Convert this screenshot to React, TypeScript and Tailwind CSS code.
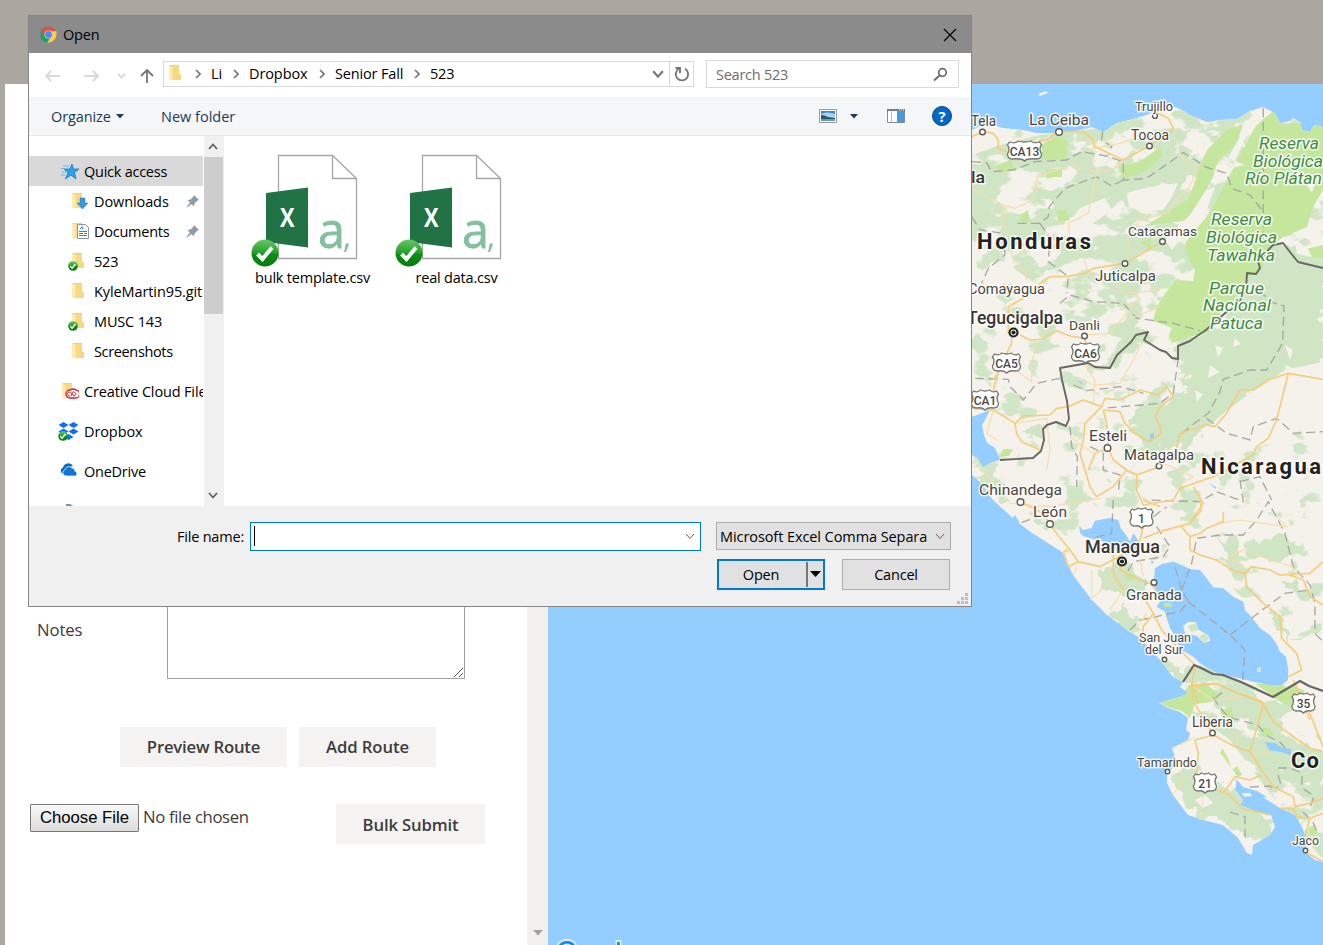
import React from "react";

const UI = "font-['Open_Sans','Noto_Sans',sans-serif]";

function Folder({ className = "" }: { className?: string }) {
  return (
    <svg className={className} width="14" height="18" viewBox="0 0 14 18">
      <path d="M1 1h10v9h2v6H4L1 15z" fill="#f3d06f" />
      <path d="M4 2h7v8h2v6H4z" fill="#f6d982" />
      <path d="M1 1l3.5 2v14L1 15z" fill="#ffeab0" />
    </svg>
  );
}

function Check({ size }: { size: number }) {
  return (
    <svg width={size} height={size} viewBox="0 0 28 28">
      <defs>
        <linearGradient id="ok" x1="0" y1="0" x2="0" y2="1">
          <stop offset="0" stopColor="#67c767" />
          <stop offset=".5" stopColor="#22a02a" />
          <stop offset=".55" stopColor="#0a8d14" />
          <stop offset="1" stopColor="#067d0c" />
        </linearGradient>
      </defs>
      <circle cx="14" cy="14" r="13.5" fill="url(#ok)" />
      <path d="M6.500 15l5 5L21 8.500" fill="none" stroke="#fff" strokeWidth="4" />
    </svg>
  );
}

function FileIcon() {
  return (
    <svg width="108" height="116" viewBox="0 0 108 116">
      <path d="M26.500 1.500h54L104.500 24.500V104.500H26.500z" fill="#fff" stroke="#a6a6a6" strokeWidth="1.300" />
      <path d="M80.500 1.500V24.500h24" fill="none" stroke="#a6a6a6" strokeWidth="1.300" />
      <path d="M14 39L56 33.500V93.500L14 88z" fill="#217346" />
      <text x="28" y="73" fontFamily="Open Sans" fontWeight="700" fontSize="27" textLength="14.500" lengthAdjust="spacingAndGlyphs" fill="#fff">X</text>
      <text x="66" y="94" fontFamily="Open Sans" fontSize="50" fill="#86bf9f" stroke="#86bf9f" strokeWidth=".8" textLength="27" lengthAdjust="spacingAndGlyphs">a</text>
      <text x="90.500" y="94" fontFamily="Open Sans" fontSize="34" fill="#86bf9f">,</text>
    </svg>
  );
}

function Pin() {
  return (
    <svg width="13" height="13" viewBox="0 0 13 13">
      <path d="M8 0l5 5-1.500.5-3 3-.500 3L5.500 9 1 12.500.500 12 4 7.500 1.500 5l3-.500 3-3z" fill="#8e9aa5" />
    </svg>
  );
}

function Chevron({ className = "", w = 10, color = "#606060", sw = 1.8 }: { className?: string; w?: number; color?: string; sw?: number }) {
  return (
    <svg className={className} width={w} height={w * 0.7} viewBox="0 0 10 7">
      <path d="M1 1l4 4.500L9 1" fill="none" stroke={color} strokeWidth={sw} />
    </svg>
  );
}

type LabelProps = { x: number; y: number; w: number; s?: number; children: string; weight?: number; green?: boolean; ls?: number };
function Label({ x, y, w, s = 14, children, weight = 400, green, ls }: LabelProps) {
  return (
    <text
      x={x}
      y={y}
      fontSize={s}
      fontFamily="Roboto, sans-serif"
      fontWeight={weight}
      fontStyle={green ? "italic" : "normal"}
      fill={green ? "#3f8c3f" : weight > 500 ? "#222" : weight > 400 ? "#383633" : "#4a4742"}
      stroke="#fff"
      strokeOpacity=".85"
      strokeWidth="3"
      strokeLinejoin="round"
      paintOrder="stroke"
      letterSpacing={ls}
      textLength={w}
      lengthAdjust={ls ? "spacing" : "spacingAndGlyphs"}
    >
      {children}
    </text>
  );
}

function Shield({ x, y, w, children }: { x: number; y: number; w: number; children: string }) {
  const h = w / 2;
  return (
    <g transform={`translate(${x} ${y})`}>
      <path
        d={`M${-h + 2} -9Q${-h / 2} -7 ${-h / 2 + 2} -10Q0 -8 ${h / 2 - 2} -10Q${h / 2} -7 ${h - 2} -9L${h} -6Q${h - 3} -2 ${h} 3Q${h} 8 ${h - 5} 8Q3 7 0 10Q-3 7 ${-h + 5} 8Q${-h} 8 ${-h} 3Q${-h + 3} -2 ${-h} -6z`}
        fill="#fff"
        stroke="#777570"
        strokeWidth="1.300"
      />
      <text textAnchor="middle" y="4.500" fontSize="12" fontWeight="500" fontFamily="Roboto, sans-serif" fill="#4b4844">{children}</text>
    </g>
  );
}

function Town({ x, y, r = 2.8 }: { x: number; y: number; r?: number }) {
  return <circle cx={x} cy={y} r={r} fill="#fff" stroke="#5c5a56" strokeWidth="1.400" />;
}

function Capital({ x, y }: { x: number; y: number }) {
  return (
    <g>
      <circle cx={x} cy={y} r="4" fill="#fff" stroke="#222" strokeWidth="2.200" />
      <circle cx={x} cy={y} r="2.100" fill="#222" />
    </g>
  );
}

const LAND =
  "M972 130L980 126 993 125 1003 128 1023 130 1037 133 1060 133 1080 130 1092 127 1103 132 1117 123 1137 118 1155 112 1163 108 1175 107 1182 110 1190 115 1207 122 1220 120 1237 119 1250 111 1263 107 1275 113 1280 123 1290 121 1293 118 1300 122 1302 130 1310 132 1314 125 1323 127V862L1315 860 1305 852 1307 840 1302 827 1295 815 1280 808 1267 800 1253 790 1243 787 1237 780 1235 790 1243 800 1240 805 1257 812 1271 815 1275 827 1270 835 1253 845 1252 855 1247 853 1238 838 1223 825 1203 820 1188 815 1173 795 1167 783 1167 772 1177 765 1172 748 1188 740 1190 733 1186 730 1188 718 1180 712 1168 708 1159 703 1180 697 1188 693 1180 687 1183 682 1173 677 1160 660 1140 638 1130 632 1107 615 1092 600 1073 575 1062 552 1032 533 1015 520 993 500 980 482 972 475z";

function MapDrawing() {
  return (
    <svg className="block" width="775" height="861" viewBox="548 84 775 861">
      <defs>
        <filter id="rough" x="-10%" y="-10%" width="120%" height="120%" colorInterpolationFilters="sRGB">
          <feTurbulence type="fractalNoise" baseFrequency=".07" numOctaves="3" seed="4" result="n" />
          <feDisplacementMap in="SourceGraphic" in2="n" scale="20" xChannelSelector="R" yChannelSelector="G" />
        </filter>
        <filter id="dense" x="0" y="0" width="100%" height="100%" colorInterpolationFilters="sRGB">
          <feTurbulence type="fractalNoise" baseFrequency=".028 .042" numOctaves="4" seed="11" />
          <feColorMatrix values="0 0 0 0 0  0 0 0 0 0  0 0 0 0 0  14 0 0 0 -6.300" result="m" />
          <feComposite in="SourceGraphic" in2="m" operator="in" />
        </filter>
        <filter id="sparse" x="0" y="0" width="100%" height="100%" colorInterpolationFilters="sRGB">
          <feTurbulence type="fractalNoise" baseFrequency=".035 .045" numOctaves="4" seed="7" />
          <feColorMatrix values="0 0 0 0 0  0 0 0 0 0  0 0 0 0 0  14 0 0 0 -8.300" result="m" />
          <feComposite in="SourceGraphic" in2="m" operator="in" />
        </filter>
        <clipPath id="land"><path d={LAND} /></clipPath>
      </defs>
      <rect x="548" y="84" width="775" height="861" fill="#94cdff" />
      <path d={LAND} fill="#f5f2eb" />

      <g clipPath="url(#land)">
        <path filter="url(#sparse)" d="M972 110H1323V640L1290 640 1200 560 1150 560 1060 540 972 480z" fill="#d0e6c6" />
        <path filter="url(#dense)" d="M972 155L1000 145 1040 135 1100 128 1180 110 1250 112 1280 140 1220 240 1190 300 1150 345 1110 335 1060 300 972 240z" fill="#cfe5c4" />
        <path filter="url(#dense)" d="M1160 690L1200 665 1290 700 1323 740V860L1290 820 1230 740z" fill="#cfe5c4" />
        <g fill="#cfe5c4" filter="url(#rough)">
          <path d="M1058 190L1095 172 1125 183 1105 200 1078 222 1055 210 1062 195zM1110 180L1150 160 1180 158 1200 172 1180 185 1125 188z" />
          <path d="M1225 318L1246 275 1273 245 1323 250V365L1285 372 1262 390 1235 405 1215 420 1200 435 1185 450 1165 448 1160 430 1130 425 1130 408 1165 405 1185 385 1192 365 1172 352 1180 342 1210 330z" />
          <path d="M1120 340L1135 325 1145 332 1135 345 1112 368 1090 372 1088 362 1108 365z" />
          <path d="M1097 570L1122 560 1140 575 1155 590 1140 600 1105 592zM1108 612L1120 605 1143 630 1130 632 1110 618z" />
          <path d="M1177 772L1192 763 1205 778 1220 785 1240 795 1260 810 1274 820 1270 832 1252 845 1235 830 1215 820 1190 812 1174 788zM1195 688L1245 688 1275 710 1285 740 1262 745 1250 725 1225 715z" />
          <path d="M1278 758L1300 742 1323 755V790L1300 785 1285 775zM1130 430L1155 412 1170 430 1160 450 1145 445z" />
          <path d="M1035 425L1042 428 1040 435 1020 434zM975 480L987 475 1005 485 1010 500 995 500zM1278 580L1295 582 1305 598 1290 590zM1270 610L1282 622 1290 645 1270 620zM1222 538L1232 540 1245 560 1230 565zM1245 548L1285 533 1300 545 1280 562 1250 560z" />
          <path d="M1160 660L1180 665 1192 675 1183 684 1172 676z" />
        </g>
        <g fill="#c5e79d">
          <path d="M1275 110L1280 123H1323V190L1313 207 1307 227 1283 237 1273 245 1260 272 1246 278 1243 290 1223 310 1210 331 1190 337 1172 343 1169 335 1172 328 1153 321 1157 306 1168 290 1175 280 1193 281 1195 270 1187 256 1185 243 1197 228 1210 213 1227 180 1243 150 1257 123z" />
          <path d="M1243 124L1227 130 1207 150 1200 167 1193 187 1187 200 1160 217 1143 227 1160 224 1190 220 1200 200 1213 177 1217 163 1237 143z" />
          <path d="M1042 144L1058 136 1067 141 1067 158 1048 161 1042 158zM996 165L1011 160 1015 170 999 173zM1046 170L1062 168V177H1047zM1119 166L1138 163 1160 147 1163 156 1145 172 1123 179zM1020 215L1028 210 1030 222 1021 222zM1056 211L1066 210 1070 220 1058 222zM1140 243L1151 238 1151 248zM1302 250L1323 245V258L1310 257z" />
          <path d="M1000 456L1003 449H1013L1009 456zM1125 576L1133 573 1137 578 1129 580z" />
          <path d="M1159 703L1181 697 1189 685 1209 686 1221 696 1211 702 1195 704 1190 718 1182 711 1170 708zM1220 710L1232 708 1234 718 1222 718zM1272 697L1292 685 1305 691 1292 708zM1255 684L1280 683 1294 692 1273 696zM1218 762L1222 748 1228 758 1232 770 1237 766 1242 775 1236 778 1230 770zM1260 728L1270 728 1274 736 1262 736zM1190 783L1197 786 1194 791zM1308 828L1314 825 1318 833 1311 836z" />
        </g>
        <g fill="#f5f2eb">
          <path d="M1245 165L1228 158 1238 140 1250 118 1262 108 1272 112 1262 120 1246 137 1240 150 1232 168zM1127 193L1145 188 1178 183 1172 197 1163 210 1140 212 1128 203zM1080 208L1105 198 1112 210 1095 222 1068 238 1062 232zM1206 190L1215 187 1205 215 1180 240 1172 250 1165 240 1190 215z" />
          <path d="M1215 345L1223 348 1218 358zM1235 338L1241 344 1233 347zM1285 345L1293 350 1290 360zM1195 390L1203 394 1197 402zM1295 243L1307 247 1312 257 1297 254zM1305 182L1317 178 1312 193zM1210 365L1220 372 1208 378z" />
          <path d="M1210 425L1225 412 1252 392 1285 370 1323 362V420L1280 440 1220 450 1200 442z" />
          <path d="M1212 745L1222 755 1240 780 1218 778 1208 765zM1195 800L1205 795 1213 803 1203 808z" />
        </g>
      </g>

      <g fill="#94cdff">
        <path d="M972 417L990 410 986 418 982 425 984 435 987 443 995 448 1000 460 992 462 983 467 978 458 972 455z" />
        <g transform="translate(960 500) scale(.3333)">
          <path d="M585 205L605 192 640 185 665 195 690 208 720 210 740 235 760 262 790 265 820 290 850 305 855 330 875 352 900 385 930 405 950 432 960 455 978 470 985 510 984 540 965 556 930 555 880 545 820 530 770 518 745 505 720 490 700 470 665 450 650 425 640 400 630 385 622 360 615 335 590 320 600 305 592 285 580 260z" />
          <path d="M358 78L368 90 395 84 405 62 450 54 475 60 482 85 498 105 510 125 520 100 535 120 530 160 490 165 465 150 450 130 400 118 370 108 360 98z" />
          <path d="M165 45l15 25 -25 -12zM555 235l10 15 -12 8zM575 180l8 8 -10 3z" />
        </g>
        <path d="M1150 435l4 -3v7l-4 3zM1076 380l6 2v2zM1208 483l8 4v2zM1265 742l10 1 8 5 8 1v6l-10 -3 -12 -2z" />
        <path d="M1235 778l8 10 14 3 10 6 -12 2 -15 -8z" />
      </g>
      <g fill="#f5f2eb">
        <path d="M1183 626l5 -4 8 0 3 8 9 5 2 6 -6 2 -7 -7 -12 -3z" />
        <path d="M1038 94l8 -3 2 2 -8 3zM1242 793l8 0 2 3 -8 1z" />
      </g>
      <g fill="#cfe5c4">
        <circle cx="1204" cy="638" r="4" />
        <path d="M1188 626l8 -3 3 7 -8 2zM1257 668l4 -1v5l-4 0z" />
        <path d="M1164 603l7 0 1 4 -8 0z" fill="#c5e79d" />
      </g>

      <g fill="none" stroke="#a9a7a2" strokeWidth="1.300" strokeDasharray="9 5">
        <g transform="translate(960 80) scale(.3333)" strokeWidth="4" strokeDasharray="27 14">
          <path d="M35 245L80 248 95 275 160 270 225 245 320 240 365 215 440 228 490 245 490 300 560 295 670 218 740 262 800 280 815 325 870 345 910 395M910 85V470M490 300L455 318 410 290 315 325 268 380 265 410 240 430 160 430M240 430L270 475 265 545 325 590 320 640M35 410L60 450 130 460 135 525 85 565 65 610M428 155L425 180 455 200 445 225" />
        </g>
        <g transform="translate(960 290) scale(.3333)" strokeWidth="4" strokeDasharray="27 14">
          <path d="M300 40L330 15 400 35 490 40 530 85 640 100 720 122M900 0L930 35 972 48 968 160 920 240 870 240 790 268 780 305 745 370 690 410 655 440M655 205L640 310 600 340 430 355M300 265L230 280 190 330 150 290 145 268 40 265M340 285L380 302 480 290 550 310M330 410L335 470 352 500 350 590M390 470L430 490 430 540 480 555 475 610M740 385L800 430 870 450 880 410 950 385 1000 430 1089 425M840 570L850 635 770 605 720 635 560 630M840 575L900 560 935 630" />
        </g>
        <g transform="translate(960 500) scale(.3333)" strokeWidth="4" strokeDasharray="27 14">
          <path d="M185 68L230 50M460 0L455 100 395 115M510 390L540 360 660 335 685 305 665 270 645 200M665 270L695 190 710 115 780 105 850 105 890 60 925 5 975 100 1000 200 1050 255 1065 310 1065 400 1089 425M685 305L810 405 855 450 848 545M810 405L900 335 975 280 1050 270M580 50L620 20M590 80L630 140 610 170 520 185 500 220" />
        </g>
        <path d="M1213 697l5 8 10 12 30 8 8 10 15 8 8 10M1215 698l10 -8M1278 775l3 10 -5 3M1278 768l12 0 12 5 0 15 12 8 -5 15M1230 812l15 5 0 20M1250 787l20 -1 6 6M1303 812l10 10 5 12" />
      </g>

      <g fill="none" stroke="#f8dcae" strokeWidth="1.100">
        <g transform="translate(960 80) scale(.3333)" strokeWidth="3.500">
          <path d="M35 325L130 375 165 385 210 365 230 330 230 290 260 280 330 258 410 275 460 268 490 240M395 180L400 205 480 190 530 170M410 275L385 400 325 430 330 480 370 530 385 575M655 205L670 240 710 270 690 320 640 370 625 400 540 420 500 470 515 520M130 375L125 430 160 480 155 530 190 570 200 600M385 575L440 590 490 640 600 630M130 610L180 640" />
        </g>
        <g transform="translate(960 290) scale(.3333)" strokeWidth="3.500">
          <path d="M560 130L520 210 480 280 400 285 345 260M375 225L405 270 400 340M540 20L450 130 370 135M100 360L80 430 110 450M165 400L260 385 270 480 260 540M400 490L330 440M650 590L700 560 610 520M230 160L215 220 215 275 180 250 150 200M50 530L120 590 150 640 270 650 420 625M600 50L500 90" />
        </g>
        <g transform="translate(960 500) scale(.3333)" strokeWidth="3.500">
          <path d="M860 210L810 170 850 150 930 180 1000 200M770 70L840 60 980 80 950 50M395 210L395 290M460 240L390 300M490 270L450 330M340 225L350 200M560 340L520 400M700 560L760 600 870 590M540 180L550 230" />
        </g>
        <path d="M1180 745l15 -8M1203 775l-20 5 -10 15M1205 785l-5 35M1250 755l20 -3M1235 745l5 -15" />
      </g>

      <g fill="none" stroke="#f3cd80" strokeWidth="1.700" strokeLinejoin="round">
        <g transform="translate(960 80) scale(.3333)" strokeWidth="5">
          <path d="M35 170L70 155 100 160 115 180 115 205 140 215M235 185L265 178 290 155 370 155 395 175 405 200 490 240 555 205 630 160 640 145 625 115 590 98 585 80M235 615L270 590 320 590 375 580 400 565 495 550 530 530 605 485" />
        </g>
        <g transform="translate(960 290) scale(.3333)" strokeWidth="5">
          <path d="M145 130L145 50 190 25M155 130L155 160 140 190M180 135L210 150 245 148 290 122 330 138 375 145 378 170M115 245L105 280 100 305M35 355L100 360 165 400 170 430 185 455 240 480M165 400L190 378 270 375 290 355 325 350 370 330 425 350 435 325 480 330 540 300 595 315 620 290 640 320 600 350 585 380 600 410 605 430 565 455 525 430 495 400 480 365 430 360M425 350L375 400 370 450 360 490 375 540 390 590 410 620 460 590 500 540 530 555 600 530 650 475 660 430 740 405 765 410 800 370 840 300 880 300 925 270 985 250 1089 268M985 250L970 310 950 390 925 445 890 470 880 495 760 560 660 595 640 630 550 645 530 600 530 555M430 360L440 400 445 475 460 510 500 540M385 540L405 490 445 475M100 270L130 225M700 590L730 640 690 700" />
        </g>
        <g transform="translate(960 500) scale(.3333)" strokeWidth="5">
          <path d="M180 5L250 40 270 75 330 150 355 185 420 200 485 165 540 120 550 80M310 155L325 200 355 185M310 155L330 150M485 185L480 210 540 240 570 250 590 270M550 115L600 95 690 70 725 30 720 0M660 75L690 110 690 150 720 165 770 180 825 215 855 220 875 200 930 210 960 225 1050 220 1089 185M990 225L1030 240 1050 290 1089 315M855 220L860 260 910 310 960 350 965 415 1010 460 1025 510 985 530M460 160L460 220 490 270M550 290L580 340 605 390 660 450 705 495 695 560 715 610M580 340L550 380 545 440M695 560L770 550 820 575 905 605 930 650M1000 540L1030 610 1050 660M600 20L550 0M790 35L790 65 740 85 720 100 690 110" />
        </g>
        <g transform="translate(1080 680) scale(.3333)" strokeWidth="5">
          <path d="M335 15L340 65 375 120 400 165 345 180 355 220 350 280M400 165L465 200 510 215 545 270 580 320 640 350 645 380 690 370 729 355M335 15L405 10 470 38 550 70 540 110 510 215M550 70L580 125 640 170 690 205 729 215M410 330L450 345 485 385 570 405M430 340L465 290 510 300 545 285M600 385L640 385 650 410 690 415 729 400M690 415L675 470M675 515L729 545M650 30L690 100 729 200" />
        </g>
      </g>

      <g fill="none" stroke="#696763" strokeWidth="1.900" strokeLinejoin="round">
        <path d="M1000 460L1033 458 1041 451 1044 440 1043 429 1047 425 1056 422 1066 426 1069 419 1067 401 1062 380 1060 368 1088 363 1095 367 1110 368 1117 355 1131 342 1136 335 1148 332 1144 340 1160 350 1166 352 1172 358 1178 359 1178 346 1190 341 1200 334 1206 330 1215 322 1240 300 1246 290 1247 273 1256 274 1260 268 1258 261 1273 245 1283 243 1290 252 1298 262 1323 268" />
        <path d="M1183 682L1194 665 1201 668 1213 674 1223 675 1241 682 1273 697 1300 681 1309 686 1323 691" strokeWidth="2.200" />
      </g>

      <Town x={982.5} y={132} /><Town x={1059} y={132} r={3.3} /><Town x={1155} y={116} r={2.4} />
      <Town x={1149.5} y={146} /><Town x={1162.5} y={241.5} /><Town x={1125} y={263.5} />
      <Town x={1084.5} y={336} /><Town x={1107.5} y={448} r={3.3} /><Town x={1159} y={466} />
      <Town x={1020.5} y={502} r={3.3} /><Town x={1050} y={524} r={3.3} /><Town x={1154} y={582.5} />
      <Town x={1164.5} y={659.5} r={2.2} /><Town x={1212.5} y={733} /><Town x={1167.5} y={771.5} r={2.2} />
      <Town x={1305.5} y={850.5} r={2.2} />
      <Capital x={1013.5} y={332.5} /><Capital x={1122} y={561.5} />

      <Label x={971} y={126} w={25}>Tela</Label>
      <Label x={1029} y={125} w={60} s={15}>La Ceiba</Label>
      <Label x={1135} y={111} w={38} s={13}>Trujillo</Label>
      <Label x={1131} y={140} w={38}>Tocoa</Label>
      <Label x={971} y={183} w={14} s={17} weight={500}>la</Label>
      <Label x={977} y={249} w={116} s={22} weight={700} ls={2}>Honduras</Label>
      <Label x={1128} y={235.5} w={69} s={13.5}>Catacamas</Label>
      <Label x={1095} y={281} w={61}>Juticalpa</Label>
      <Label x={968} y={294} w={77}>Comayagua</Label>
      <Label x={967} y={324} w={96} s={18} weight={500}>Tegucigalpa</Label>
      <Label x={1069} y={330} w={31} s={13.5}>Danli</Label>
      <Label x={1089} y={441} w={38} s={15}>Esteli</Label>
      <Label x={1124} y={460} w={70}>Matagalpa</Label>
      <Label x={1201} y={474} w={122} s={22} weight={700} ls={2}>Nicaragua</Label>
      <Label x={979} y={495} w={83} s={15}>Chinandega</Label>
      <Label x={1033} y={517} w={34} s={15}>León</Label>
      <Label x={1085} y={553} w={75} s={17.5} weight={500}>Managua</Label>
      <Label x={1126} y={600} w={56} s={14.5}>Granada</Label>
      <Label x={1139} y={642} w={52} s={12}>San Juan</Label>
      <Label x={1145} y={654} w={38} s={12}>del Sur</Label>
      <Label x={1192} y={727} w={41} s={14}>Liberia</Label>
      <Label x={1137} y={766.5} w={60} s={13}>Tamarindo</Label>
      <Label x={1291} y={768} w={30} s={22} weight={700} ls={2}>Co</Label>
      <Label x={1292} y={845} w={27} s={12.5}>Jaco</Label>

      <Label green x={1259} y={149} w={60} s={17}>Reserva</Label>
      <Label green x={1253} y={167} w={70} s={17}>Biológica</Label>
      <Label green x={1245} y={184} w={77} s={17}>Río Plátan</Label>
      <Label green x={1211} y={225} w={61} s={17}>Reserva</Label>
      <Label green x={1206} y={243} w={71} s={17}>Biológica</Label>
      <Label green x={1207} y={261} w={68} s={17}>Tawahka</Label>
      <Label green x={1209} y={293.5} w={55} s={16.5}>Parque</Label>
      <Label green x={1203} y={311} w={68} s={16.5}>Nacional</Label>
      <Label green x={1210} y={329} w={53} s={17}>Patuca</Label>

      <Shield x={1024.5} y={151} w={34}>CA13</Shield>
      <Shield x={1006.5} y={363} w={28}>CA5</Shield>
      <Shield x={1085.5} y={353} w={28}>CA6</Shield>
      <Shield x={985} y={400} w={27}>CA1</Shield>
      <Shield x={1141.5} y={518} w={23}>1</Shield>
      <Shield x={1303.5} y={703} w={23}>35</Shield>
      <Shield x={1205} y={783} w={23}>21</Shield>

      <text x="555" y="965" fontFamily="Roboto, sans-serif" fontSize="34" stroke="#d9edff" strokeWidth="4" paintOrder="stroke" fill="#1a86f0">G</text>
      <path d="M615.500 940h6v6h-6z" fill="#d9edff" />
      <path d="M617 942h3v4h-3z" fill="#23a566" />
    </svg>
  );
}

function Side({ icon, label, level = 0, pin, selected, gap, ls = "" }: { icon: React.ReactNode; label: string; level?: number; pin?: boolean; selected?: boolean; gap?: boolean; ls?: string }) {
  return (
    <div className={`flex h-[30px] shrink-0 items-center overflow-hidden whitespace-nowrap ${selected ? "bg-[#d9d9d9]" : ""} ${gap ? "mt-[10px]" : ""} ${level ? "pl-[38px]" : "pl-[28px]"}`}>
      <span className="flex w-[27px] shrink-0 items-center">{icon}</span>
      <span className={`flex-1 overflow-hidden pt-[2px] ${ls}`}>{label}</span>
      {pin && <span className="pr-1"><Pin /></span>}
    </div>
  );
}

function SyncedFolder() {
  return (
    <span className="relative flex pl-[4px]">
      <Folder />
      <span className="absolute top-[9px] left-[1px]"><Check size={10} /></span>
    </span>
  );
}

function Crumb({ children, className }: { children: string; className: string }) {
  return (
    <>
      <svg width="6" height="10" viewBox="0 0 6 10" className="shrink-0"><path d="M1 1l4 4-4 4" fill="none" stroke="#757575" strokeWidth="1.700" /></svg>
      <span className={`whitespace-nowrap ${className}`}>{children}</span>
    </>
  );
}

function Dialog() {
  return (
    <div className={`absolute top-[15px] left-[28px] flex h-[592px] w-[944px] flex-col border border-[#858585] bg-white text-[14.5px] leading-[20px] text-black ${UI}`}>
      <div className="flex h-[37px] shrink-0 items-center bg-[#8b8b8b] pr-[14px] pl-[11px]">
        <svg width="17" height="17" viewBox="0 0 18 18">
          <path d="M1 4Q9 -3 16 4L17 6H9L5 11z" fill="#dd5144" />
          <path d="M.5 4L6 12l3 1.500L7.500 18Q0 16 .5 9z" fill="#1da462" />
          <path d="M9 5.500h8.300Q19 17 7.500 18L12.500 11z" fill="#ffcd46" />
          <circle cx="9" cy="9" r="4.300" fill="#d9d9d9" />
          <circle cx="9" cy="9" r="3.600" fill="#4b8bf4" />
        </svg>
        <span className="ml-[6px] flex-1 tracking-[-0.2px]">Open</span>
        <svg width="14" height="14" viewBox="0 0 14 14"><path d="M1 1l12 12M13 1L1 13" stroke="#000" strokeWidth="1.200" /></svg>
      </div>

      <div className="flex h-[44px] shrink-0 items-center pr-[12px] pb-[2px] pl-[16px]">
        <svg width="110" height="18" viewBox="0 0 110 18" fill="none" strokeWidth="1.800">
          <path d="M15 11H1M6 6l-5 5 5 5" stroke="#d9d9d9" />
          <path d="M39 11h14M48 6l5 5-5 5" stroke="#d9d9d9" />
          <path d="M73 9l3.500 3.500L80 9" stroke="#d9d9d9" />
          <path d="M102 18V5M96 11l6-6 6 6" stroke="#757575" />
        </svg>
        <div className="ml-[8px] flex h-[26px] w-[531px] items-center border border-[#d9d9d9]">
          <Folder className="ml-[4px] -mt-[2px] shrink-0" />
          <div className="ml-[13px] flex flex-1 items-center">
            <Crumb className="ml-[10px] w-[22px]">Li</Crumb>
            <Crumb className="ml-[10px] w-[70px] tracking-[-0.1px]">Dropbox</Crumb>
            <Crumb className="ml-[10px] w-[79px] tracking-[-0.15px]">Senior Fall</Crumb>
            <Crumb className="ml-[10px] tracking-[-0.2px]">523</Crumb>
          </div>
          <Chevron w={12} className="mr-[5px]" color="#757575" />
          <div className="flex h-full w-[24px] items-center justify-center border-l border-[#d9d9d9]">
            <svg width="16" height="16" viewBox="0 0 16 16"><path d="M11 2.800A6.200 6.200 0 1 1 4.500 3M1.500 2h4.500v5" fill="none" stroke="#757575" strokeWidth="1.900" /></svg>
          </div>
        </div>
        <div className="ml-[12px] flex h-[28px] flex-1 items-center border border-[#d9d9d9] pr-[10px] pl-[9px]">
          <span className="flex-1 pt-[2px] tracking-[-0.25px] text-[#6d6d6d]">Search 523</span>
          <svg width="15" height="15" viewBox="0 0 15 15" fill="none" stroke="#6d6d6d"><circle cx="9.500" cy="5.500" r="3.800" strokeWidth="1.700" /><path d="M6.500 8.500L1 13.500" strokeWidth="2" /></svg>
        </div>
      </div>

      <div className="flex h-[39px] shrink-0 items-center border-b border-[#e8e9ea] bg-[#f4f6f8] pr-[19px] pl-[22px] text-[#1e395b]">
        <span className="w-[65px] pt-[2px] tracking-[-0.1px]">Organize</span>
        <svg width="8" height="5" viewBox="0 0 8 5"><path d="M0 0h8L4 4.500z" fill="#1e395b" /></svg>
        <span className="ml-[37px] flex-1 pt-[2px]">New folder</span>
        <svg width="18" height="14" viewBox="0 0 18 14">
          <path d="M.5.5h17v13H.5z" fill="#fff" stroke="#9b9b9b" />
          <path d="M2 2h14v10H2z" fill="#a9d2f5" /><path d="M2 2h14v3Q8 2 2 5z" fill="#3b87d8" />
          <path d="M2 6q4 0 7 2l7 1v1H2z" fill="#2f5a55" /><path d="M2 10h14v2H2z" fill="#5c9fc4" />
        </svg>
        <svg className="ml-[13px]" width="8" height="5" viewBox="0 0 8 5"><path d="M0 0h8L4 4.500z" fill="#1e395b" /></svg>
        <svg className="ml-[29px]" width="18" height="14" viewBox="0 0 18 14">
          <path d="M.5.5h17v13H.5z" fill="#fff" stroke="#8a8a8a" /><path d="M0 0h18v2H0z" fill="#7b7b7b" />
          <path d="M4.500 2v11" stroke="#bbb" /><path d="M10 2h7v11h-7z" fill="#3d9be8" /><path d="M12 1h1M14 1h1M16 1h1" stroke="#fff" />
        </svg>
        <svg className="ml-[27px]" width="20" height="20" viewBox="0 0 20 20">
          <circle cx="10" cy="10" r="9.500" fill="#0067c7" stroke="#06498c" />
          <text x="10" y="15.500" textAnchor="middle" fontSize="15" fontWeight="700" fontFamily="Open Sans" fill="#fff">?</text>
        </svg>
      </div>

      <div className="flex h-[370px] shrink-0">
        <div className="flex w-[174px] flex-col overflow-hidden pt-[20px]">
          <Side selected label="Quick access" ls="tracking-[-0.25px]" icon={
            <svg className="ml-[4px]" width="18" height="17" viewBox="0 0 18 17"><path d="M11 1l1.500 5H18l-4.500 3.500L15 16l-5-4-5.500 4L7 9.500 3 6h6z" fill="#2ba1ea" stroke="#1778c4" strokeWidth=".8" /><path d="M2 3h6M0 5.500h4M1 9h4M0 12h4" stroke="#64b9ed" /></svg>
          } />
          <Side level={1} pin label="Downloads" ls="tracking-[-0.1px]" icon={
            <span className="relative flex pl-[4px]"><Folder /><svg className="absolute top-[5px] left-[10px]" width="11" height="12" viewBox="0 0 11 12"><path d="M3 1h5v5h3l-5.500 6L0 6h3z" fill="#3a95df" stroke="#2976bb" strokeWidth=".5" /></svg></span>
          } />
          <Side level={1} pin label="Documents" ls="tracking-[-0.25px]" icon={
            <span className="relative flex pl-[4px]"><Folder /><svg className="absolute top-[2px] left-[10px]" width="12" height="15" viewBox="0 0 12 15"><path d="M.5.5h8l3 3v11H.5z" fill="#fff" stroke="#8b959c" /><path d="M2 7.500h8M2 9.500h4M7 9.500h3M2 11.500h8M3 5.500l2-3 1 3" stroke="#2c87ce" fill="none" /></svg></span>
          } />
          <Side level={1} label="523" ls="tracking-[-0.2px]" icon={<SyncedFolder />} />
          <Side level={1} label="KyleMartin95.github.io" ls="tracking-[-0.1px]" icon={<Folder className="ml-[4px]" />} />
          <Side level={1} label="MUSC 143" ls="tracking-[-0.15px]" icon={<SyncedFolder />} />
          <Side level={1} label="Screenshots" ls="tracking-[-0.35px]" icon={<Folder className="ml-[4px]" />} />
          <Side gap label="Creative Cloud Files" ls="tracking-[-0.15px]" icon={
            <span className="relative flex pl-[4px]"><Folder /><svg className="absolute top-[6px] left-[8px]" width="14" height="11" viewBox="0 0 14 11"><path d="M5 10a4 4 0 0 1 0-8q3-2 6 0a4 4 0 0 1-1 8z" fill="#fff" stroke="#da1f26" strokeWidth="1.300" /><path d="M5 8a2 2 0 1 1 1-3.500L9 8a2 2 0 1 0-1.500-3.500L6 8" fill="none" stroke="#da1f26" /></svg></span>
          } />
          <Side gap label="Dropbox" ls="tracking-[-0.1px]" icon={
            <span className="relative flex pl-px"><svg width="21" height="18" viewBox="0 0 21 18"><path d="M5.500 0l5 3-5 3-5-3zM15.500 0l5 3-5 3-5-3zM5.500 6.500l5 3-5 3-5-3zM15.500 6.500l5 3-5 3-5-3zM10.500 12l5 3-5 3-5-3z" fill="#0d6efc" /></svg><span className="absolute top-[9px] left-[1px]"><Check size={10} /></span></span>
          } />
          <Side gap label="OneDrive" ls="tracking-[-0.25px]" icon={
            <svg className="mb-[3px] ml-[2px]" width="19" height="13" viewBox="0 0 19 13"><path d="M4 11a3.500 3.500 0 0 1 0-6.500A5.500 5.500 0 0 1 14 3L7 5z" fill="#0b67bd" /><path d="M7 13a3.300 3.300 0 0 1-1-6.400A4 4 0 0 1 13 5a3.300 3.300 0 0 1 3 3.300A2.500 2.500 0 0 1 16.500 13z" fill="#0b78d7" stroke="#fff" strokeWidth=".7" /></svg>
          } />
          <svg className="mt-[18px] ml-[37px] shrink-0" width="9" height="3" viewBox="0 0 9 3"><path d="M0 0h4l5 3H0z" fill="#7f97aa" /></svg>
        </div>
        <div className="ml-px flex w-[20px] flex-col items-start bg-[#f0f0f0]">
          <div className="flex h-[21px] items-center pl-[4px]"><Chevron className="rotate-180" w={10} /></div>
          <div className="h-[157px] w-[19px] bg-[#cdcdcd]" />
          <div className="flex flex-1 items-end pb-[7px] pl-[4px]"><Chevron w={10} /></div>
        </div>
        <div className="flex flex-1 pt-[18px] pl-[28px]">
          {["bulk template.csv", "real data.csv"].map((name) => (
            <div key={name} className="relative flex w-[144px] flex-col">
              <FileIcon />
              <span className="absolute top-[85px] -left-px flex"><Check size={28} /></span>
              <span className="-mt-[2px] w-[121px] text-center tracking-[-0.2px] whitespace-nowrap">{name}</span>
            </div>
          ))}
        </div>
      </div>

      <div className="relative flex flex-1 flex-col gap-[9px] bg-[#f0f0f0] pt-[16px]">
        <div className="flex h-[28px] items-center">
          <span className="w-[221px] pt-[2px] pr-[6px] text-right tracking-[-0.2px]">File name:</span>
          <div className="flex h-[29px] w-[451px] items-center justify-between border border-[#0078d7] bg-white pr-[5px] pl-[3px]">
            <div className="h-[20px] w-px bg-black" />
            <Chevron sw={1} />
          </div>
          <div className="ml-[15px] flex h-[28px] w-[235px] items-center justify-between border border-[#adadad] bg-[#e1e1e1] pr-[5px] pl-[3px]">
            <span className="pt-[2px] tracking-[-0.08px] whitespace-nowrap">Microsoft Excel Comma Separa</span>
            <Chevron sw={1} />
          </div>
        </div>
        <div className="flex h-[31px] pl-[688px]">
          <div className="flex w-[108px] items-center border-2 border-[#0078d7] bg-[#e1e1e1]">
            <span className="w-[87px] pr-[3px] text-center tracking-[-0.2px]">Open</span>
            <div className="h-[25px] w-[2px] bg-[#777]" />
            <svg className="ml-[2px]" width="11" height="7" viewBox="0 0 11 7"><path d="M0 0h11L5.500 6z" /></svg>
          </div>
          <div className="ml-[17px] flex w-[108px] items-center justify-center border border-[#adadad] bg-[#e1e1e1] tracking-[-0.2px]">Cancel</div>
        </div>
        <svg className="absolute right-[2px] bottom-px" width="12" height="12" viewBox="0 0 12 12" fill="#bfbfbf"><path d="M8 0h3v3H8zM8 4h3v3H8zM4 4h3v3H4zM8 8h3v3H8zM4 8h3v3H4zM0 8h3v3H0z" /></svg>
      </div>
    </div>
  );
}

export default function App() {
  return (
    <div className={`relative flex h-[945px] w-[1323px] flex-col overflow-hidden bg-[#aca6a1] pt-[84px] pl-[5px] text-[16.7px] text-[#3c3c3c] ${UI}`}>
      <div className="flex flex-1">
        <div className="flex w-[522px] flex-col bg-white">
          <div className="flex h-[595px] items-end">
            <span className="mb-[37px] w-[162px] pl-[32px] leading-[24px] tracking-[-0.1px]">Notes</span>
            <div className="flex h-[120px] w-[298px] items-end justify-end border border-[#a6a19d] p-px">
              <svg width="9" height="9" viewBox="0 0 9 9"><path d="M0 9l9-9M5 9l4-4" stroke="#555" /></svg>
            </div>
          </div>
          <div className="mt-[48px] flex h-[40px] gap-[12px] pl-[115px] font-semibold">
            <div className="flex w-[167px] items-center justify-center bg-[#f4f3f2] tracking-[-0.2px]">Preview Route</div>
            <div className="flex w-[137px] items-center justify-center bg-[#f4f3f2] tracking-[-0.1px]">Add Route</div>
          </div>
          <div className="mt-[37px] flex items-start pl-[25px]">
            <div className="flex h-[28px] w-[109px] items-center justify-center rounded-[1px] border border-[#777] bg-linear-to-b from-[#f8f8f8] to-[#dddddb] font-['Liberation_Sans',sans-serif] text-black">Choose File</div>
            <span className="ml-[4px] w-[193px] leading-[26px] tracking-[-0.35px]">No file chosen</span>
            <div className="flex h-[40px] w-[149px] items-center justify-center bg-[#f4f3f2] pt-[2px] font-semibold tracking-[-0.15px]">Bulk Submit</div>
          </div>
        </div>
        <div className="flex w-[21px] items-end justify-center bg-[#f1f0ef] pb-[9px]">
          <svg width="10" height="6" viewBox="0 0 10 6"><path d="M0 0h10L5 5.500z" fill="#a3a09c" /></svg>
        </div>
        <MapDrawing />
      </div>
      <Dialog />
    </div>
  );
}
